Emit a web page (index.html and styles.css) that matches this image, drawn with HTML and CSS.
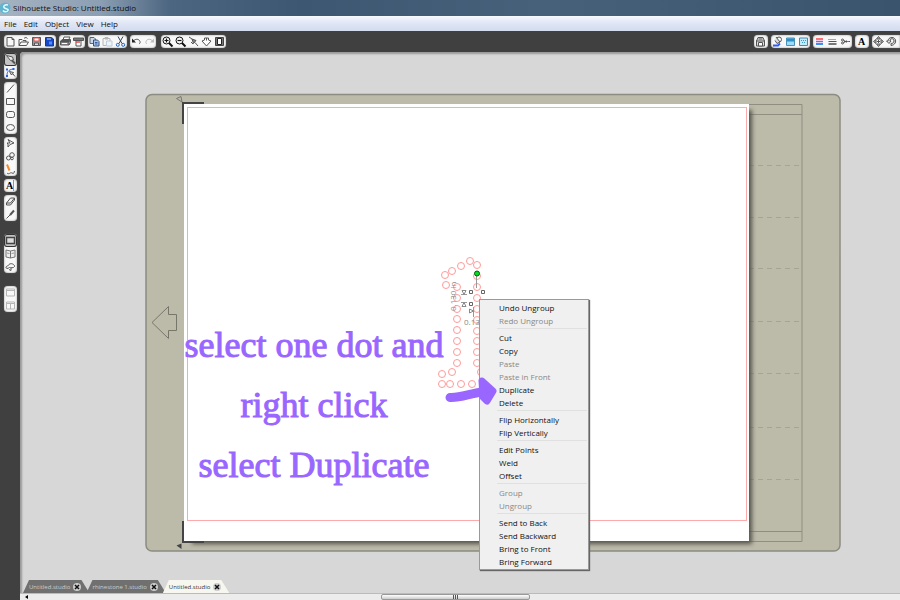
FILE: index.html
```html
<!DOCTYPE html>
<html lang="en">

<head>
    <meta charset="utf-8">
    <title>Silhouette Studio: Untitled.studio</title>
    <link rel="stylesheet" href="styles.css">
</head>

<body>
    <header id="titlebar">
        <svg class="logo" viewBox="0 0 12 12">
            <circle cx="5" cy="6" r="5.5" fill="#5fb4d0" />
            <path d="M8 3C5 2 3 4 4 5.500s5 1 4 3-4 1.500-5 0" fill="none" stroke="#e8f8ff" stroke-width="1.500" />
        </svg>
        <span>Silhouette Studio: Untitled.studio</span>
    </header>

    <nav id="menubar">
        <button>File</button>
        <button>Edit</button>
        <button>Object</button>
        <button>View</button>
        <button>Help</button>
    </nav>

    <div id="toolbar">
        <div class="group">
            <button class="tool" aria-label="New"><svg viewBox="0 0 13 13"><path d="M3 2.5h5l2 2v6.5h-7z M8 2.5v2h2" /></svg></button>
            <button class="tool" aria-label="Open"><svg viewBox="0 0 13 13"><path d="M2 10.500V4.500h3l1 1h3v1.500 M2 10.500l2-3.500h7.500l-2 3.500z M7 3.500c1-1.500 3-1 3.500 0" /></svg></button>
            <button class="tool" aria-label="Save"><svg viewBox="0 0 13 13"><path d="M2.500 2.500h8v8h-8z" fill="#999" /><path d="M4 3h5v3H4z" fill="#fff" stroke="#d55" /><path d="M4.500 8h4v2.500h-4z" fill="#ddd" stroke="#555" /></svg></button>
            <button class="tool" aria-label="Save to library"><svg viewBox="0 0 13 13"><path d="M2.500 2.500h6l2 1.500v7h-8z" fill="#1748c8" stroke="#183a88" /><path d="M4 3.500h4v1H4z" fill="#cde" stroke="none" /><path d="M6 6.500h3v3H6z" fill="#4f8cff" stroke="none" /></svg></button>
        </div>
        <div class="group">
            <button class="tool" aria-label="Print"><svg viewBox="0 0 13 13"><path d="M4 5l1-3h6l-1.500 3" fill="#fff" /><path d="M1.500 6l2-1.500h8L10 7H1.500z" fill="#555" /><path d="M1.500 7h8.500v3H1.500z M10 10l1.500-2.500V5" fill="#999" /><path d="M3 8.500h5" stroke="#fff" /></svg></button>
            <button class="tool" aria-label="Cut"><svg viewBox="0 0 13 13"><path d="M1.500 3h10v2.500h-10z" fill="#777" /><path d="M4 5.500h5v5.500H4z" fill="#fff" /><path d="M4 7h4" stroke="#e44" stroke-width="1.500" /></svg></button>
        </div>
        <div class="group">
            <button class="tool" aria-label="Copy"><svg viewBox="0 0 13 13"><path d="M2 2.500h4l1.500 1.500v4.500H2z" fill="#cbd8ea" stroke="#567" /><path d="M5.500 5h4l1.500 1.500v4.500H5.500z" fill="#a9c4ed" stroke="#357" /><path d="M7 7.500h2.500 M7 9h2.500" stroke="#35609c" /></svg></button>
            <button class="tool faded" aria-label="Paste"><svg viewBox="0 0 13 13"><path d="M2 3.500h7v7H2z M4 2.500h3v1.500H4z" fill="#eee" /><path d="M5.500 6h5.500v5H5.500z" fill="#def" stroke="#68a" /></svg></button>
            <button class="tool" aria-label="Scissors"><svg viewBox="0 0 13 13"><path d="M4 1.500l4 7 M9 1.500l-4 7" stroke="#345" /><circle cx="3.800" cy="9.800" r="1.500" stroke="#1866c8" /><circle cx="9.200" cy="9.800" r="1.500" stroke="#1866c8" /></svg></button>
        </div>
        <div class="group">
            <button class="tool" aria-label="Undo"><svg viewBox="0 0 13 13"><path d="M3 6.500c2-3 6-3 7 0 .5 1.500-.5 2-1 2.500" /><path d="M2 3.500v4h4z" fill="#222" stroke="none" /></svg></button>
            <button class="tool faded" aria-label="Redo"><svg viewBox="0 0 13 13"><path d="M10 6.500c-2-3-6-3-7 0-.5 1.500.5 2 1 2.500" /><path d="M11 3.500v4H7z" fill="#666" stroke="none" /></svg></button>
        </div>
        <div class="group zoom">
            <button class="tool" aria-label="Zoom in"><svg viewBox="0 0 13 13"><circle cx="5.500" cy="5.500" r="3.500" stroke="#111" /><path d="M8 8l3.500 3.500" stroke="#111" stroke-width="2" /><path d="M3.500 5.500h4 M5.500 3.500v4" stroke="#111" stroke-width="1.200" /></svg></button>
            <button class="tool" aria-label="Zoom out"><svg viewBox="0 0 13 13"><circle cx="5.500" cy="5.500" r="3.500" stroke="#111" /><path d="M8 8l3.500 3.500" stroke="#111" stroke-width="2" /><path d="M3.500 5.500h4" stroke="#111" stroke-width="1.200" /></svg></button>
            <button class="tool" aria-label="Zoom selection"><svg viewBox="0 0 13 13"><path d="M2 2l3 2 M5 4l4 1.500-2.500 3z" fill="#888" /><path d="M8 7.500l3 3.500 M4 7l2 2" /></svg></button>
            <button class="tool" aria-label="Pan"><svg viewBox="0 0 13 13"><path d="M2 6l2.500-1V3h4v2L11 6l-4.500 5z M6.500 3v2.500" fill="#fff" /></svg></button>
            <button class="tool" aria-label="Fit to page"><svg viewBox="0 0 13 13"><path d="M2.500 2.500h8v8h-8z" fill="#777" stroke="#444" /><path d="M4.500 3.500h4v6h-4z" fill="#fff" stroke="#222" /></svg></button>
        </div>

        <div class="spacer"></div>

        <div class="group">
            <button class="tool" aria-label="Store"><svg viewBox="0 0 13 13"><path d="M2.500 6l1.500-3.500h5L10.500 6v5h-8z M2 6h9" fill="#ddd" /><path d="M4.500 7.500h4V11h-4z M4.500 4h4" fill="#fff" /></svg></button>
        </div>
        <div class="group">
            <button class="tool" aria-label="Fill color"><svg viewBox="0 0 13 13"><circle cx="8" cy="4.500" r="2.500" /><path d="M5 2l4 5-3 1.500-2-3" fill="#ddd" /><path d="M2 10.500h5l2-2" stroke="#2c5cff" stroke-width="1.800" /></svg></button>
            <button class="tool" aria-label="Fill gradient"><svg viewBox="0 0 13 13"><path d="M2.500 3h8v7.500h-8z" fill="#9bdcf8" stroke="#4a91b8" /><path d="M3 3.500h7v3H3z" fill="#2e8fc9" stroke="none" /></svg></button>
            <button class="tool" aria-label="Fill pattern"><svg viewBox="0 0 13 13"><path d="M2.500 3h8v7.500h-8z" fill="#c4ebfb" stroke="#3a8db9" /><path d="M4 5.500h1M6 5.500h1M8 5.500h1M5 7.500h1M7 7.500h1" stroke="#3a9bc9" /></svg></button>
        </div>
        <div class="group">
            <button class="tool" aria-label="Line color"><svg viewBox="0 0 13 13"><path d="M3 4h7" stroke="#ff7070" stroke-width="2" /><path d="M3 6.500h7" stroke="#a05ae0" stroke-width="1.500" /><path d="M3 9h7" stroke="#3d90f0" stroke-width="2" /></svg></button>
            <button class="tool" aria-label="Line style"><svg viewBox="0 0 13 13"><path d="M2.500 4.500h8" stroke-dasharray="1 1" /><path d="M2.500 6.500h8" /><path d="M2.500 9h8" stroke="#777" stroke-width="2" /></svg></button>
            <button class="tool" aria-label="Cut style"><svg viewBox="0 0 13 13"><path d="M5 6.500h6 M4.500 5l3 2.500 M4.500 8l3-2.500" /><circle cx="3.500" cy="5" r="1" /><circle cx="3.500" cy="8" r="1" /><path d="M8 6.500h2" stroke="#e44" /></svg></button>
        </div>
        <div class="group">
            <button class="tool letter">A</button>
        </div>
        <div class="group cut-off">
            <button class="tool" aria-label="Move"><svg viewBox="0 0 13 13"><path d="M6.500 1.500l2 2.500h-4z M6.500 11.500l2-2.500h-4z M1.500 6.500l2.500-2v4z M11.500 6.500l-2.500-2v4z" fill="#bbb" /><path d="M5 6.500h3 M6.500 5v3" /></svg></button>
            <button class="tool" aria-label="Rotate"><svg viewBox="0 0 13 13"><path d="M1.500 6L4 8.500 6 6H5c0-3 4-3 4 0 0 2-2 2.500-3 2.500v2c6-.5 6-8 1-8-3 0-4 2-4 3.500z" fill="#ddd" /></svg></button>
        </div>
    </div>

    <main>
        <aside id="tools">
            <div class="group">
                <button class="tool pressed" aria-label="Select"><svg viewBox="0 0 13 13"><path d="M2.500 2.500l6 1.500 1 3-3 .5z" fill="#eee" /><path d="M8 7.500l3 3" stroke-width="2" /></svg></button>
                <button class="tool" aria-label="Edit points"><svg viewBox="0 0 13 13"><path d="M3 10c0-4 1-6 6-7" stroke="#2860e0" /><path d="M2 2.500h2v2H2z M8.500 2h2v2h-2z M2 9h2v2H2z" fill="#2860e0" stroke="none" /><path d="M5.500 5.500l4 1-2 2.500z M9 8l2 2.500" fill="#ddd" /></svg></button>
            </div>
            <div class="group">
                <button class="tool" aria-label="Line"><svg viewBox="0 0 13 13"><path d="M3 10.500l7-8" /></svg></button>
                <button class="tool" aria-label="Rectangle"><svg viewBox="0 0 13 13"><path d="M2.500 3.500h8v6h-8z" /></svg></button>
                <button class="tool" aria-label="Rounded rectangle"><svg viewBox="0 0 13 13"><rect x="2.500" y="3.500" width="8" height="6" rx="2" /></svg></button>
                <button class="tool" aria-label="Ellipse"><svg viewBox="0 0 13 13"><ellipse cx="6.500" cy="6.500" rx="4" ry="3" /></svg></button>
            </div>
            <div class="group">
                <button class="tool" aria-label="Polygon"><svg viewBox="0 0 13 13"><path d="M4 2.500l6 3.500-4 1.500L4 10V7L3 6h3z" /></svg></button>
                <button class="tool" aria-label="Curve"><svg viewBox="0 0 13 13"><circle cx="8" cy="5" r="2.300" /><circle cx="4.500" cy="8" r="2" /><circle cx="8" cy="8.500" r="1.300" /></svg></button>
                <button class="tool" aria-label="Freehand"><svg viewBox="0 0 13 13"><path d="M3 1.500l2.500 6" stroke="#f58a2c" stroke-width="2" /><path d="M3 10c2 2 3-1 5 0s2 0 2.500-2" /></svg></button>
            </div>
            <div class="group">
                <button class="tool letter">A<i></i></button>
            </div>
            <div class="group">
                <button class="tool" aria-label="Eraser"><svg viewBox="0 0 13 13"><path d="M2.500 8l4-5h4v2l-4 5h-4z M2.500 8h4l4-5" fill="#eee" /></svg></button>
                <button class="tool" aria-label="Knife"><svg viewBox="0 0 13 13"><path d="M2.500 10.500l3.500-3.500" /><path d="M6 7l4-4.500" stroke-width="2" /></svg></button>
            </div>
            <div class="group apart">
                <button class="tool pressed" aria-label="Page view"><svg viewBox="0 0 13 13"><path d="M2.500 3.500h8v6h-8z" fill="#ddd" stroke="#444" stroke-width="1.500" /></svg></button>
                <button class="tool" aria-label="Library"><svg viewBox="0 0 13 13"><path d="M2 3l4.500 1L11 3v7l-4.500 1L2 10z M6.500 4v7" fill="#eee" stroke="#777" /><path d="M3 6l2.500.5 M7.500 6.500L10 6" stroke="#999" /></svg></button>
                <button class="tool" aria-label="Online store"><svg viewBox="0 0 13 13"><path d="M2 7.500c0-2 3-1.500 3-3 2-2 6 0 5.500 2-1 2-4 1-5 1-2 1.500-3.500 1-3.500 0z M7 8v2.500l-2-1" /></svg></button>
            </div>
            <div class="group apart">
                <button class="tool faded" aria-label="Single view"><svg viewBox="0 0 13 13"><path d="M2.500 3h8v7h-8z M2.500 4.500h8" /></svg></button>
                <button class="tool faded" aria-label="Split view"><svg viewBox="0 0 13 13"><path d="M2.500 3h8v7h-8z M2.500 4.500h8 M6.500 4.500V10" /></svg></button>
            </div>
        </aside>

        <section id="workspace">
            <div id="canvas">
                <!-- cutting mat, page and the dots of the "1" -->
                <svg class="drawing">
                    <defs>
                        <filter id="soft"><feGaussianBlur stdDeviation="2" /></filter>
                    </defs>
                    <g transform="translate(-20 -52)" fill="none">
                        <rect x="146" y="94.500" width="694" height="456.500" rx="6" fill="#bcbaa9" stroke="#8c8c82" stroke-width="1.500" />
                        <g stroke="#8f8e80">
                            <path d="M749 104.500h53v437h-53" />
                            <path d="M749 114.500h53M749 531.500h53" />
                            <path d="M749 165.500h50M749 217.500h50M749 268.500h50M749 321.500h50M749 373.500h50M749 427.500h50M749 479.500h50" stroke="#a4a394" stroke-dasharray="5 4" />
                        </g>
                        <path d="M192 110h560v434H192z" fill="#555549" filter="url(#soft)" />
                        <rect x="184" y="104" width="565" height="437" fill="#fff" />
                        <rect x="187.500" y="107.500" width="559" height="413" stroke="#ffaaaa" />
                        <path d="M204 103H183v21M183 521v21h21" stroke="#444" stroke-width="2" />
                        <path d="M176.500 98.500l4.500-2 1 5.500z" stroke="#777" />
                        <path d="M176.500 545.500l5-2v5.500z" fill="#444" />
                        <path d="M152 322.500l16.500-16v8h8v16h-8v8z" stroke="#77766a" />

                        <g stroke="#ff9a9a">
                            <circle cx="470" cy="261" r="3.500" /><circle cx="461" cy="266" r="3.500" />
                            <circle cx="477" cy="265" r="3.500" /><circle cx="452" cy="271" r="3.500" />
                            <circle cx="445" cy="275" r="3.500" /><circle cx="477" cy="276" r="3.500" />
                            <circle cx="446" cy="285" r="3.500" /><circle cx="457" cy="287" r="3.500" />
                            <circle cx="477" cy="287" r="3.500" />
                            <circle cx="457" cy="298" r="3.500" /><circle cx="477" cy="298" r="3.500" />
                            <circle cx="457" cy="309" r="3.500" /><circle cx="477" cy="309" r="3.500" />
                            <circle cx="457" cy="319" r="3.500" /><circle cx="477" cy="320" r="3.500" />
                            <circle cx="457" cy="330" r="3.500" /><circle cx="477" cy="331" r="3.500" />
                            <circle cx="457" cy="341" r="3.500" /><circle cx="477" cy="341" r="3.500" />
                            <circle cx="457" cy="352" r="3.500" /><circle cx="477" cy="352" r="3.500" />
                            <circle cx="457" cy="363" r="3.500" /><circle cx="477" cy="363" r="3.500" />
                            <circle cx="452" cy="372" r="3.500" /><circle cx="481" cy="372" r="3.500" />
                            <circle cx="442" cy="374" r="3.500" /><circle cx="442" cy="384" r="3.500" />
                            <circle cx="450" cy="384" r="3.500" /><circle cx="461" cy="384" r="3.500" />
                            <circle cx="472" cy="384" r="3.500" />
                        </g>

                        <path d="M476.500 276v12M461 294.500h6M461 302.500h6M473.500 307v10" stroke="#999" />
                        <path d="M462 290.500h4l-2 4zM462 306.500h4l-2-4zM469.500 309v4l4-2z" stroke="#888" />
                        <path d="M469.500 290.500h3v3h-3zM481.500 290.500h3v3h-3zM469.500 302.500h3v3h-3z" fill="#fff" stroke="#666" />
                        <circle cx="477" cy="273.500" r="2.500" fill="#00dd22" stroke="#055a10" />
                        <text class="size" x="464" y="325">0.130 in</text>
                        <text class="size" transform="translate(456 311) rotate(-90)">0.130 in</text>
                    </g>
                </svg>

                <p class="note">select one dot and<br>right click<br>select Duplicate</p>

                <div class="context-menu">
                    <button>Undo Ungroup</button>
                    <button disabled>Redo Ungroup</button>
                    <hr>
                    <button>Cut</button>
                    <button>Copy</button>
                    <button disabled>Paste</button>
                    <button disabled>Paste in Front</button>
                    <button>Duplicate</button>
                    <button>Delete</button>
                    <hr>
                    <button>Flip Horizontally</button>
                    <button>Flip Vertically</button>
                    <hr>
                    <button>Edit Points</button>
                    <button>Weld</button>
                    <button>Offset</button>
                    <hr>
                    <button disabled>Group</button>
                    <button disabled>Ungroup</button>
                    <hr>
                    <button>Send to Back</button>
                    <button>Send Backward</button>
                    <button>Bring to Front</button>
                    <button>Bring Forward</button>
                </div>

                <svg class="pointer" viewBox="0 0 52 32">
                    <path d="M5 21.500C17 22 25 17 38 16" />
                    <path class="head" d="M37 5l11 10-6 10-4-4z" />
                </svg>
            </div>

            <div id="tabs">
                <button class="tab">Untitled.studio <svg viewBox="0 0 8 8"><circle cx="4" cy="4" r="4" /><path d="M2 2l4 4M6 2l-4 4" /></svg></button>
                <button class="tab">rhinestone 1.studio <svg viewBox="0 0 8 8"><circle cx="4" cy="4" r="4" /><path d="M2 2l4 4M6 2l-4 4" /></svg></button>
                <button class="tab active">Untitled.studio <svg viewBox="0 0 8 8"><circle cx="4" cy="4" r="4" /><path d="M2 2l4 4M6 2l-4 4" /></svg></button>
            </div>

            <div id="scrollbar">
                <svg class="left" viewBox="0 0 3 4"><path d="M3 0v4L0 2z" /></svg>
                <div class="thumb"><i></i><i></i><i></i></div>
            </div>
        </section>
    </main>
</body>

</html>
```
FILE: styles.css
```css
* {
    box-sizing: border-box;
}

body {
    margin: 0;
    height: 100vh;
    display: flex;
    flex-direction: column;
    overflow: hidden;
    background: #404040;
    font-family: "Open Sans", "Noto Sans", sans-serif;
    font-size: 8px;
    line-height: 12px;
    color: #111;
}

button {
    border: 0;
    padding: 0;
    background: none;
    font: inherit;
    color: inherit;
}

/* title and menus */

#titlebar {
    height: 16px;
    flex: none;
    display: flex;
    align-items: center;
    gap: 1px;
    background: linear-gradient(to right, #a5b3c1 0, #8c9fb3 100px, #4c6580 170px, #3d5772 300px, #47617b 60%, #3b546e);
}

.logo {
    width: 12px;
    height: 12px;
}

#menubar {
    height: 15px;
    flex: none;
    display: flex;
    align-items: center;
    gap: 7px;
    padding-left: 4px;
    background: linear-gradient(#f8faff, #e2e8f6 40%, #d3dbee);
}

/* toolbars */

#toolbar {
    height: 21px;
    flex: none;
    display: flex;
    align-items: center;
    gap: 3px;
    padding-left: 4px;
    background: #404040;
}

.group {
    display: flex;
    min-width: 14px;
    border-radius: 4px;
    background: #f8f8f8;
    box-shadow: inset 0 0 2px #888, 0 0 1px #999;
}

.zoom {
    margin-left: 2px;
}

.cut-off {
    width: 28px;
    border-radius: 4px 0 0 4px;
}

.spacer {
    flex: 1;
}

.tool {
    width: 13px;
    height: 13px;
    flex: none;
    border-radius: 3px;
}

.tool svg {
    display: block;
    width: 13px;
    height: 13px;
    fill: none;
    stroke: #555;
    stroke-width: 1;
}

.faded svg {
    opacity: 0.4;
}

.pressed {
    background: #c4c4c4;
    box-shadow: inset 0 0 0 1px #333;
}

.letter {
    font: bold 10px/13px "Liberation Serif", serif;
    color: #000;
}

.letter i {
    border-left: 1px solid #f66;
}

main {
    flex: 1;
    display: flex;
    min-height: 0;
}

#tools {
    width: 20px;
    flex: none;
    display: flex;
    flex-direction: column;
    align-items: center;
    gap: 3px;
    padding-top: 1px;
}

#tools .group {
    flex-direction: column;
    min-width: 13px;
}

#tools .apart {
    margin-top: 10px;
}

/* workspace */

#workspace {
    flex: 1;
    display: flex;
    flex-direction: column;
    min-width: 0;
    position: relative;
    border-top-left-radius: 4px;
    overflow: hidden;
    background: #d7d7d7;
    box-shadow: inset 2px 2px 2px #999;
}

#canvas {
    flex: 1;
    min-height: 0;
    position: relative;
}

.drawing {
    position: absolute;
    width: 100%;
    height: 100%;
}

.size {
    fill: #888;
    font-size: 8px;
}

.note {
    position: absolute;
    left: 162px;
    top: 263px;
    width: 264px;
    margin: 0;
    text-align: center;
    white-space: nowrap;
    font: 36px/60px "Liberation Serif", serif;
    color: #9966ff;
    -webkit-text-stroke: 1px #9966ff;
}

.context-menu {
    position: absolute;
    left: 459px;
    top: 247px;
    width: 110px;
    display: flex;
    flex-direction: column;
    padding: 1px;
    border: 1px solid #999;
    background: #f0f0f0;
    box-shadow: 1px 1px 1px #666;
}

.context-menu button {
    height: 13px;
    padding-left: 18px;
    line-height: 13px;
    text-align: left;
}

.context-menu button:disabled {
    color: #888;
}

.context-menu hr {
    width: 90px;
    height: 1px;
    margin: 1px 0 2px 16px;
    border: 0;
    background: #e0e0e0;
}

.pointer {
    position: absolute;
    left: 425px;
    top: 324px;
    width: 52px;
    height: 32px;
    fill: none;
    stroke: #9966ff;
    stroke-width: 9;
    stroke-linecap: round;
    stroke-linejoin: round;
}

.pointer .head {
    fill: #9966ff;
    stroke-width: 7;
}

/* document tabs */

#tabs {
    display: flex;
    flex: none;
    height: 13px;
    padding-left: 3px;
    position: relative;
}

.tab {
    display: flex;
    align-items: center;
    gap: 3px;
    margin-right: -3px;
    padding: 0 8px 0 6px;
    background: #707070;
    clip-path: polygon(6px 0, calc(100% - 8px) 0, 100% 100%, 0 100%);
    font-size: 6px;
    color: #ccc;
}

.tab.active {
    background: #f7f7f0;
    color: #333;
}

.tab svg {
    width: 8px;
    height: 8px;
    fill: #ccc;
    stroke: #111;
    stroke-width: 1.5;
}

.tab circle {
    stroke: none;
}

#scrollbar {
    height: 7px;
    flex: none;
    display: flex;
    align-items: center;
    border-top: 1px solid #bbb;
    background: #ececec;
    position: relative;
}

#scrollbar .left {
    position: absolute;
    left: 5px;
    width: 3px;
    height: 4px;
}

#scrollbar .thumb {
    width: 17%;
    height: 6px;
    margin-left: 41%;
    display: flex;
    justify-content: center;
    align-items: center;
    gap: 1px;
    border: 1px solid #999;
    border-radius: 2px;
    background: linear-gradient(#fff, #ccc);
}

.thumb i {
    width: 1px;
    height: 4px;
    background: #555;
}
```
